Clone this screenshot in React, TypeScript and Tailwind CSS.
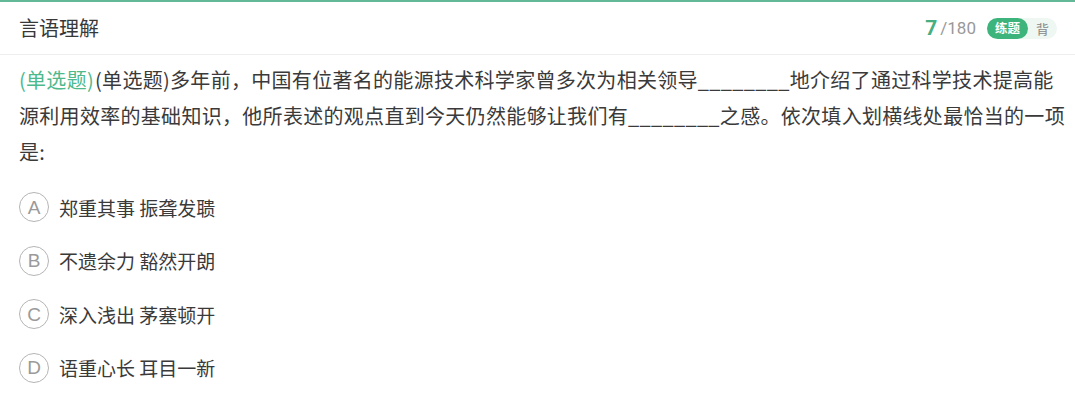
import React from 'react';

const options = [
  { key: 'A', text: '郑重其事 振聋发聩' },
  { key: 'B', text: '不遗余力 豁然开朗' },
  { key: 'C', text: '深入浅出 茅塞顿开' },
  { key: 'D', text: '语重心长 耳目一新' },
];

export default function App() {
  return (
    <div className="w-[1075px] h-[410px] bg-white border-t-2 border-[#63b898] font-['Noto_Sans_CJK_SC','Noto_Sans',sans-serif] text-[#333]">
      {/* Header */}
      <div className="h-[53px] flex items-center justify-between pl-[19px] pr-[18px] border-b border-[#eeeeee]">
        <span className="text-[20px] text-[#383838] leading-none">言语理解</span>
        <div className="flex items-center">
          <span className="font-['Roboto',sans-serif] font-bold text-[21px] text-[#47ae80] leading-none">7</span>
          <span className="font-['Roboto',sans-serif] text-[17px] text-[#999] leading-none ml-[3px]">/180</span>
          <div className="ml-[11px] flex items-center h-[21px] rounded-full bg-[#eef7f2]">
            <span className="h-[21px] px-[8px] flex items-center rounded-full bg-[#3cb47c] text-white text-[12.5px] font-bold leading-none">
              练题
            </span>
            <span className="px-[8px] text-[13px] text-[#888] leading-none">背</span>
          </div>
        </div>
      </div>

      {/* Question */}
      <p className="pl-[19px] pr-[8px] pt-[7px] text-[20px] leading-[36px] tracking-[0.3px] text-[#3a3a3a]">
        <span className="text-[#4db98c] mr-[1px]">(单选题)</span>
        (单选题)多年前，中国有位著名的能源技术科学家曾多次为相关领导________地介绍了通过科学技术提高能源利用效率的基础知识，他所表述的观点直到今天仍然能够让我们有________之感。依次填入划横线处最恰当的一项是:
      </p>

      {/* Options */}
      <div className="mt-[22px] pl-[19px] flex flex-col gap-[23.5px]">
        {options.map((opt) => (
          <div key={opt.key} className="flex items-center h-[30px]">
            <span className="w-[30px] h-[30px] rounded-full border border-[#b5b5b5] flex items-center justify-center font-['Liberation_Sans',sans-serif] text-[19px] text-[#9a9a9a] leading-none">
              {opt.key}
            </span>
            <span className="ml-[10px] text-[19px] text-[#3a3a3a] leading-none">{opt.text}</span>
          </div>
        ))}
      </div>
    </div>
  );
}
